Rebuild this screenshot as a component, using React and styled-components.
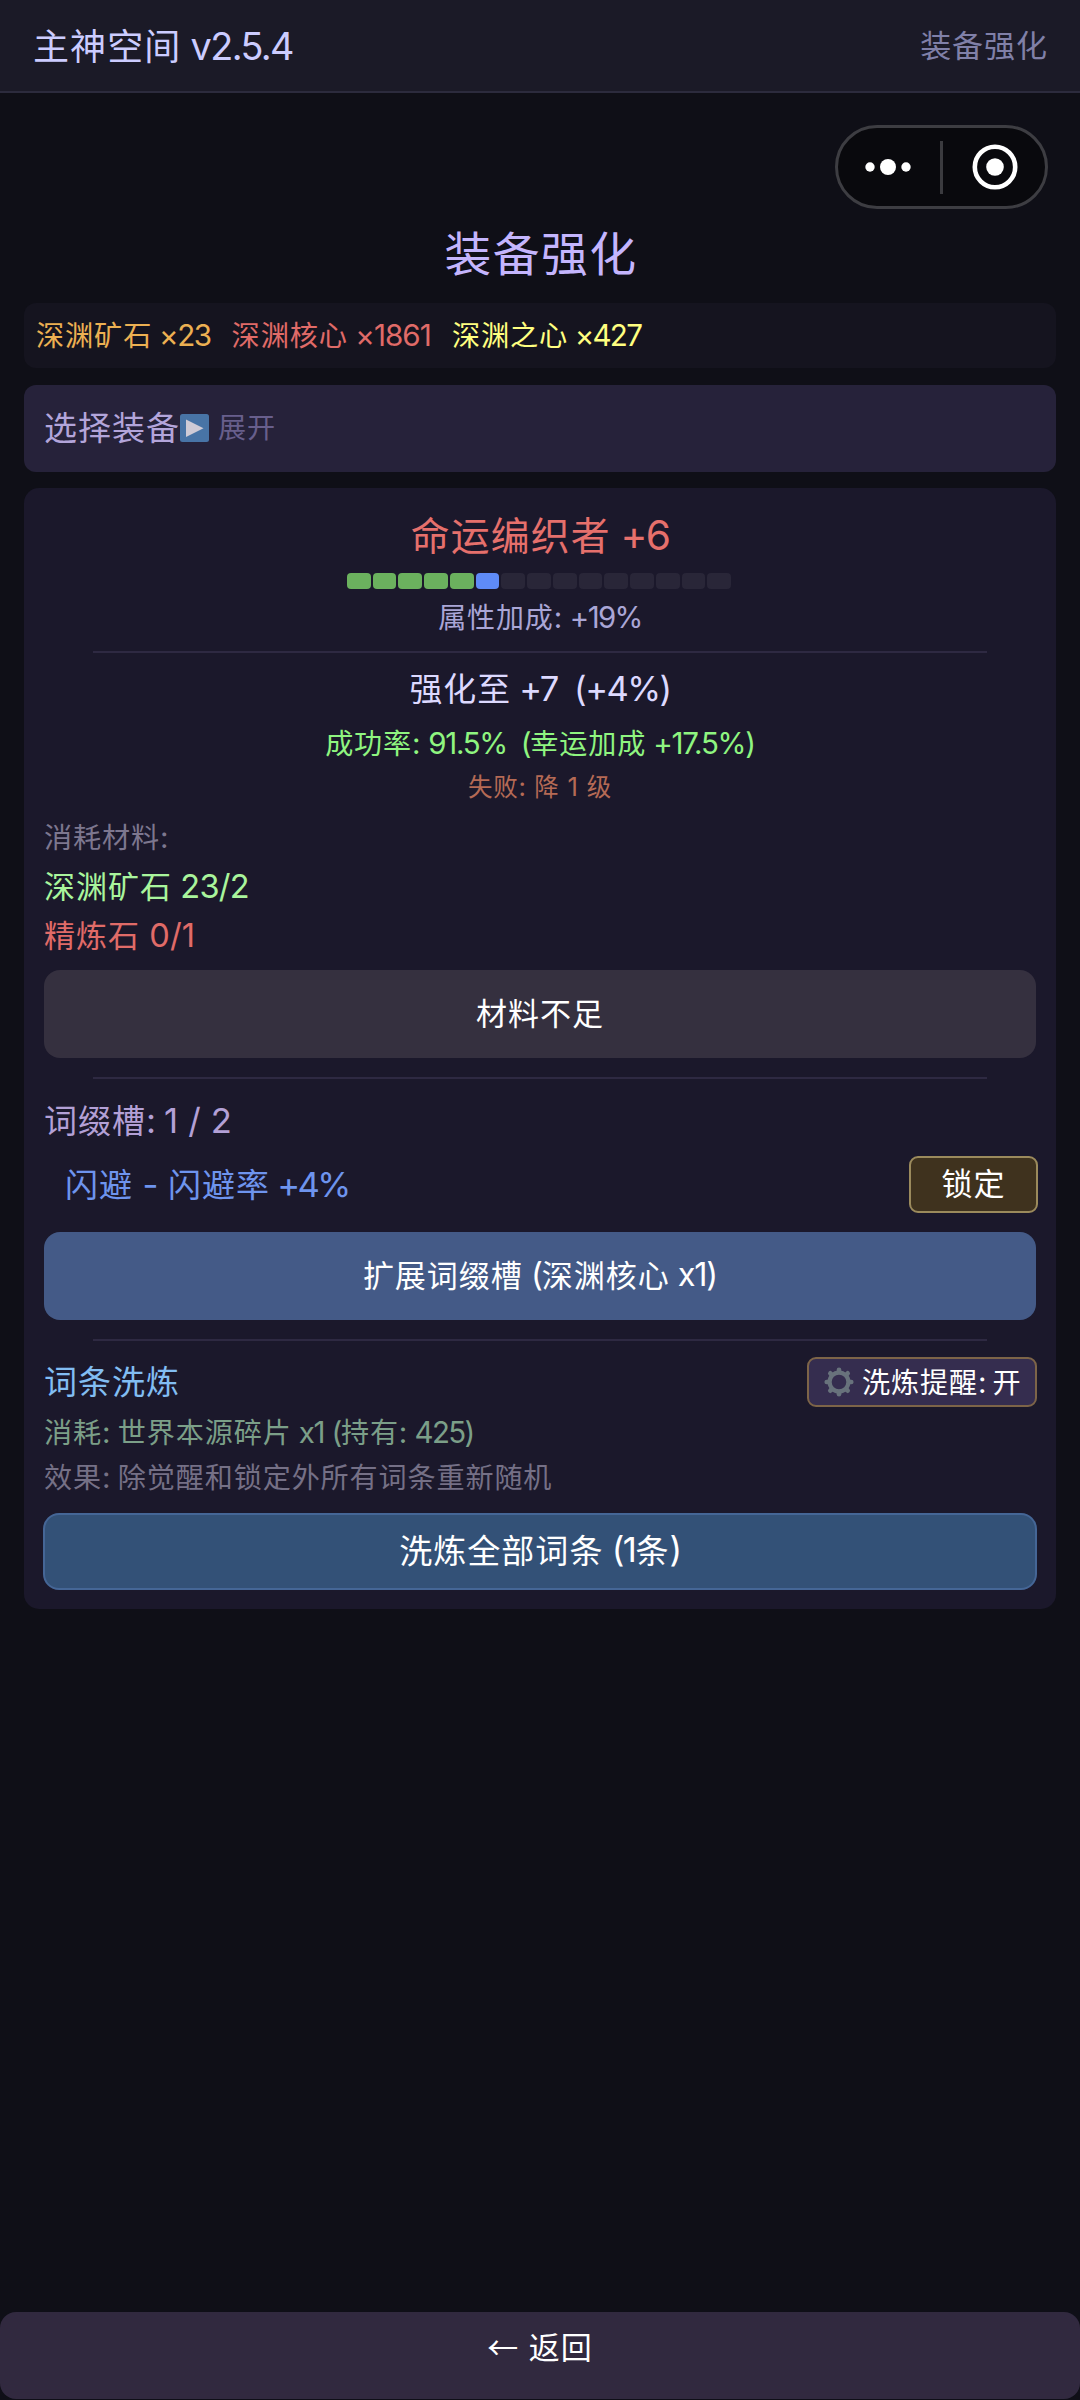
import React from "react"
import styled, { createGlobalStyle } from "styled-components"

const GlobalStyle = createGlobalStyle`
  * {
    box-sizing: border-box;
    letter-spacing: 0.031em;
  }

  body {
    margin: 0;
    background: #0f0f17;
    color: #ffffff;
    font-family: Inter, "Noto Sans CJK SC", sans-serif;
    font-weight: 400;
  }
`

const Page = styled.div`
  display: flex;
  flex-direction: column;
  width: 1080px;
  height: 2400px;
  overflow: hidden;
`

const Header = styled.header`
  display: flex;
  align-items: center;
  justify-content: space-between;
  height: 93px;
  padding: 1px 32px 0 33px;
  background: #1b1a27;
  border-bottom: 2px solid #2c2b3d;
`

const AppName = styled.div`
  color: #ccccff;
  font-size: 36px;
  line-height: 50px;
  white-space: pre;
`

const PageName = styled.div`
  color: #8080a8;
  font-size: 31px;
  line-height: 50px;
`

/* latin letters and digits run a little tighter than the chinese text */
const Num = styled.span`
  font-size: 1.05em;
  letter-spacing: ${props => props.$track || "-0.042em"};
`

const CapsuleRow = styled.div`
  display: flex;
  justify-content: flex-end;
  padding: 32px 32px 0 0;
`

const Capsule = styled.div`
  display: flex;
  align-items: center;
  width: 213px;
  height: 84px;
  border: 3px solid #3d3d42;
  border-radius: 42px;
  background: #09090d;
`

const CapsuleHalf = styled.div`
  display: flex;
  align-items: center;
  justify-content: center;
  width: 102px;
  padding-left: ${props => props.$left || 0}px;
  padding-right: ${props => props.$right || 0}px;
`

const CapsuleLine = styled.div`
  width: 3px;
  height: 53px;
  background: #3b3b3f;
`

const Title = styled.h1`
  margin: 15px 0 -1px;
  padding-left: 2px;
  color: #c4b5fd;
  font-size: 46.8px;
  font-weight: 400;
  line-height: 60px;
  text-align: center;
`

const Content = styled.main`
  flex: 1;
  padding: 20px 24px 0;
`

const Resources = styled.div`
  display: flex;
  align-items: center;
  gap: 21px;
  height: 65px;
  padding: 0 12px;
  border-radius: 12px;
  background: #15141f;
`

const Resource = styled.div`
  color: ${props => props.$color};
  font-size: 28.2px;
  line-height: 36px;
`

const Picker = styled.div`
  display: flex;
  align-items: center;
  height: 87px;
  margin-top: 17px;
  padding: 0 20px 1px;
  border-radius: 12px;
  background: #26223a;
`

const PickerLabel = styled.span`
  color: #b3a5da;
  font-size: 33px;
  line-height: 44px;
`

const PickerToggle = styled.span`
  display: flex;
  align-items: center;
  gap: 9px;
  color: #685f8c;
  font-size: 28.1px;
  line-height: 36px;
`

const Card = styled.section`
  margin-top: 16px;
  padding: 22px 20px 19px;
  border-radius: 15px;
  background: #1b182b;
`

const ItemName = styled.div`
  height: 50px;
  padding-top: 1px;
  color: #e6706c;
  font-size: 38.8px;
  line-height: 50px;
  text-align: center;
`

const Segments = styled.div`
  display: flex;
  gap: 2px;
  width: 384px;
  height: 16px;
  margin: 13px 0 0 303px;
`

const Segment = styled.div`
  flex: 1;
  border-radius: 4px;
  background: ${props => props.$color};
`

const Line = styled.div`
  height: ${props => props.$height}px;
  margin-top: ${props => props.$top}px;
  padding-left: ${props => props.$indent || 0}px;
  color: ${props => props.$color};
  font-size: ${props => props.$size}px;
  line-height: ${props => props.$height}px;
  text-align: ${props => (props.$center ? "center" : "left")};
  white-space: pre;
`

const Divider = styled.div`
  width: 894px;
  height: 2px;
  margin: ${props => props.$top}px auto 0;
  background: #2e2942;
`

const Button = styled.div`
  display: flex;
  justify-content: center;
  align-items: center;
  height: 88px;
  margin-top: ${props => props.$top}px;
  padding-bottom: 5px;
  border-radius: 16px;
  background: ${props => props.$bg};
  font-size: 31px;
  white-space: pre;
`

const RerollButton = styled(Button)`
  height: 77px;
  margin-left: -1px;
  margin-right: -1px;
  border: 2px solid #456696;
  font-size: 33px;
`

const Row = styled.div`
  display: flex;
  align-items: center;
  justify-content: space-between;
  margin-top: ${props => props.$top}px;
`

const LockButton = styled.div`
  display: flex;
  align-items: center;
  justify-content: center;
  width: 129px;
  height: 57px;
  margin-right: -2px;
  padding-bottom: 6px;
  border: 2px solid #9b8a5c;
  border-radius: 9px;
  background: #3f321e;
  font-size: 31px;
`

const RemindButton = styled.div`
  display: flex;
  align-items: center;
  gap: 8px;
  width: 230px;
  height: 50px;
  margin-right: -1px;
  padding-left: 15px;
  border: 2px solid #7d6448;
  border-radius: 9px;
  background: #352d4f;
  font-size: 28.1px;
  line-height: 36px;
  white-space: nowrap;
`

const Footer = styled.footer`
  display: flex;
  align-items: center;
  justify-content: center;
  height: 87px;
  margin-bottom: 1px;
  padding-bottom: 20px;
  border-radius: 16px;
  background: #31293f;
  font-size: 31px;
  white-space: pre;
`

const Arrow = styled.span`
  font-family: "Noto Sans CJK SC", sans-serif;
`

const MoreIcon = () => (
  <svg width="46" height="18" viewBox="0 0 46 18" fill="#fff">
    <circle cx="5" cy="9" r="4.7" />
    <circle cx="23" cy="9" r="8" />
    <circle cx="41" cy="9" r="4.7" />
  </svg>
)

const CloseIcon = () => (
  <svg width="46" height="46" viewBox="0 0 46 46">
    <circle cx="23" cy="23" r="20.2" fill="none" stroke="#fff" strokeWidth="4.6" />
    <circle cx="23" cy="23" r="8.8" fill="#fff" />
  </svg>
)

const PlayIcon = () => (
  <svg width="29" height="28" viewBox="0 0 29 28">
    <rect width="29" height="28" rx="2.5" fill="#4874a6" />
    <path d="M6 5.5v17.5L23.5 14.2z" fill="#cfcbd6" />
  </svg>
)

const GearIcon = () => (
  <svg width="30" height="30" viewBox="-15 -15 30 30">
    <circle r="9.4" fill="none" stroke="#68727c" strokeWidth="4.2" />
    {[0, 45, 90, 135, 180, 225, 270, 315].map(angle => (
      <path
        key={angle}
        d="M0 -10.5V-12.3"
        stroke="#68727c"
        strokeWidth="4.6"
        strokeLinecap="round"
        transform={`rotate(${angle})`}
      />
    ))}
  </svg>
)

const LEVEL = 6
const MAX_LEVEL = 15

const segmentColor = index => {
  if (index < LEVEL - 1) return "#6bb15e"
  return index === LEVEL - 1 ? "#5f8bf7" : "#292638"
}

const resources = [
  { name: "深渊矿石", count: 23, color: "#ecb052", track: "-0.05em" },
  { name: "深渊核心", count: 1861, color: "#e06b68", track: "-0.032em" },
  { name: "深渊之心", count: 427, color: "#ffff80", track: "-0.06em" },
]

const Enhance = () => (
  <>
    <ItemName>
      命运编织者<Num> +6</Num>
    </ItemName>
    <Segments>
      {Array.from({ length: MAX_LEVEL }, (_, i) => (
        <Segment key={i} $color={segmentColor(i)} />
      ))}
    </Segments>
    <Line $top={11} $size={28} $height={36} $color="#aaa6d6" $center>
      属性加成<Num $track="-0.01em">: </Num>
      <Num $track="-0.055em">+19%</Num>
    </Line>
    <Divider $top={15} />
    <Line $top={14} $size={32.9} $height={44} $color="#ddd9ff" $center>
      强化至<Num $track="-0.045em"> +7  (+4%)</Num>
    </Line>
    <Line $top={14} $size={28.1} $height={36} $color="#8ff580" $center>
      成功率<Num $track="-0.01em">: </Num>
      <Num $track="-0.045em">91.5%  (</Num>幸运加成<Num> +17.5%)</Num>
    </Line>
    <Line $top={10} $size={24.5} $height={32} $color="#b56a55" $center>
      失败<Num $track="0.02em">: </Num>降<Num $track="0.03em"> 1 </Num>级
    </Line>
    <Line $top={16} $size={28.1} $height={36} $color="#7d778f">
      消耗材料<Num>:</Num>
    </Line>
    <Line $top={11} $size={31} $height={40} $color="#a9f59c">
      深渊矿石<Num $track="-0.022em"> 23/2</Num>
    </Line>
    <Line $top={9} $size={31} $height={40} $color="#e06b68">
      精炼石<Num $track="0.005em"> 0/1</Num>
    </Line>
    <Button $top={15} $bg="#35303f">
      材料不足
    </Button>
  </>
)

const Affixes = () => (
  <>
    <Line $top={19} $size={33} $height={44} $color="#b3a0d6">
      词缀槽<Num $track="-0.025em">: </Num>
      <Num $track="0.005em">1 / 2</Num>
    </Line>
    <Row $top={14}>
      <Line $top={-2} $size={33} $height={44} $color="#6e94ee" $indent={21}>
        闪避<Num $track="-0.005em"> - </Num>闪避率<Num $track="-0.075em"> +4%</Num>
      </Line>
      <LockButton>锁定</LockButton>
    </Row>
    <Button $top={19} $bg="#445a87">
      扩展词缀槽<Num $track="-0.03em"> (</Num>深渊核心<Num $track="-0.035em"> x1)</Num>
    </Button>
  </>
)

const Reroll = () => (
  <>
    <Row $top={16}>
      <Line $top={0} $size={33} $height={44} $color="#82bdf2">
        词条洗炼
      </Line>
      <RemindButton>
        <GearIcon />
        <span>
          洗炼提醒<Num $track="-0.035em">: </Num>开
        </span>
      </RemindButton>
    </Row>
    <Line $top={7} $size={28.1} $height={36} $color="#7b9f88">
      消耗<Num $track="-0.015em">: </Num>世界本源碎片<Num> x1 (</Num>持有<Num $track="-0.02em">: </Num>
      <Num $track="-0.055em">425)</Num>
    </Line>
    <Line $top={9} $size={28.1} $height={36} $color="#757086">
      效果<Num $track="-0.015em">: </Num>除觉醒和锁定外所有词条重新随机
    </Line>
    <RerollButton $top={18} $bg="#335177">
      洗炼全部词条<Num> (1</Num>条<Num>)</Num>
    </RerollButton>
  </>
)

export default () => {
  return (
    <Page>
      <GlobalStyle />
      <Header>
        <AppName>
          主神空间<Num> v2.5.4</Num>
        </AppName>
        <PageName>装备强化</PageName>
      </Header>
      <CapsuleRow>
        <Capsule>
          <CapsuleHalf $right={3}>
            <MoreIcon />
          </CapsuleHalf>
          <CapsuleLine />
          <CapsuleHalf $left={2}>
            <CloseIcon />
          </CapsuleHalf>
        </Capsule>
      </CapsuleRow>
      <Title>装备强化</Title>
      <Content>
        <Resources>
          {resources.map(({ name, count, color, track }) => (
            <Resource key={name} $color={color}>
              {name}
              <Num $track={track}> ×{count}</Num>
            </Resource>
          ))}
        </Resources>
        <Picker>
          <PickerLabel>选择装备</PickerLabel>
          <PickerToggle>
            <PlayIcon />
            展开
          </PickerToggle>
        </Picker>
        <Card>
          <Enhance />
          <Divider $top={19} />
          <Affixes />
          <Divider $top={19} />
          <Reroll />
        </Card>
      </Content>
      <Footer>
        <Arrow>←</Arrow> 返回
      </Footer>
    </Page>
  )
}
